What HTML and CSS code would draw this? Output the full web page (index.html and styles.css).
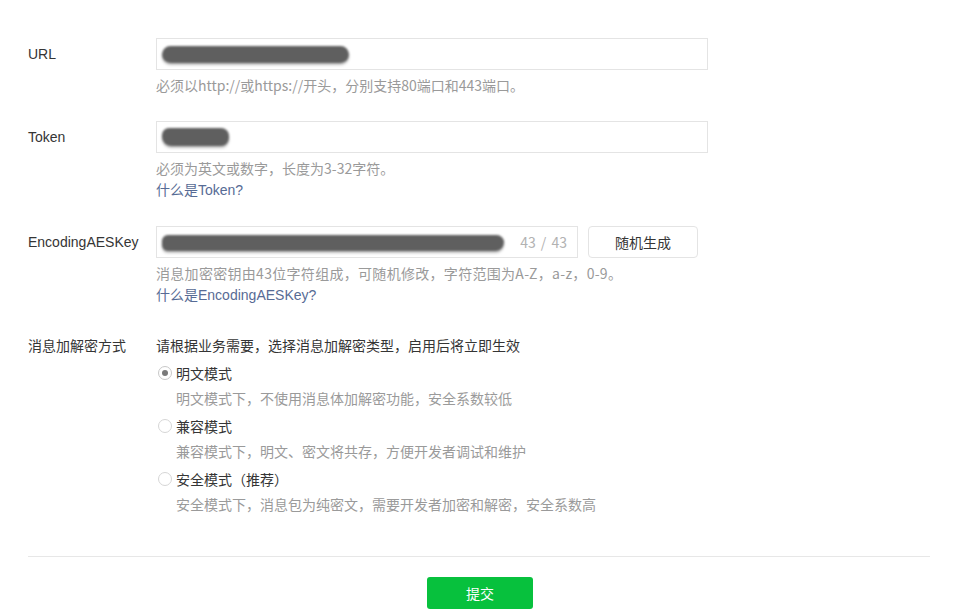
FILE: index.html
```html
<!DOCTYPE html>
<html lang="zh-CN">
<head>
<meta charset="utf-8">
<title>服务器配置</title>
<link rel="stylesheet" href="styles.css">
</head>
<body>
<form class="form">
  <div class="row">
    <label class="label">URL</label>
    <div class="field">
      <div class="input input-wide"><span class="scribble scribble-url"></span></div>
      <p class="hint">必须以http://或https://开头，分别支持80端口和443端口。</p>
    </div>
  </div>

  <div class="row">
    <label class="label">Token</label>
    <div class="field">
      <div class="input input-wide"><span class="scribble scribble-token"></span></div>
      <p class="hint">必须为英文或数字，长度为3-32字符。</p>
      <a class="link" href="#">什么是Token?</a>
    </div>
  </div>

  <div class="row">
    <label class="label">EncodingAESKey</label>
    <div class="field">
      <div class="input-group">
        <div class="input input-key">
          <span class="scribble scribble-key"></span>
          <span class="counter">43 / 43</span>
        </div>
        <button type="button" class="btn-default">随机生成</button>
      </div>
      <p class="hint hint-wide">消息加密密钥由43位字符组成，可随机修改，字符范围为A-Z，a-z，0-9。</p>
      <a class="link" href="#">什么是EncodingAESKey?</a>
    </div>
  </div>

  <div class="row row-mode">
    <label class="label label-line">消息加解密方式</label>
    <div class="field">
      <p class="intro">请根据业务需要，选择消息加解密类型，启用后将立即生效</p>
      <div class="option">
        <span class="radio checked"></span><span class="option-title">明文模式</span>
      </div>
      <p class="option-desc">明文模式下，不使用消息体加解密功能，安全系数较低</p>
      <div class="option">
        <span class="radio"></span><span class="option-title">兼容模式</span>
      </div>
      <p class="option-desc">兼容模式下，明文、密文将共存，方便开发者调试和维护</p>
      <div class="option">
        <span class="radio"></span><span class="option-title">安全模式（推荐）</span>
      </div>
      <p class="option-desc">安全模式下，消息包为纯密文，需要开发者加密和解密，安全系数高</p>
    </div>
  </div>

  <div class="divider"></div>
  <div class="actions">
    <button type="button" class="btn-primary">提交</button>
  </div>
</form>
</body>
</html>
```

FILE: styles.css
```css
* { box-sizing: border-box; }

html, body {
  margin: 0;
  padding: 0;
  background: #ffffff;
}

body {
  font-family: "Liberation Sans", "Noto Sans CJK SC", sans-serif;
  font-size: 14px;
  color: #353535;
}

.form {
  width: 930px;
  padding: 38px 0 0 28px;
}

.row {
  display: flex;
  align-items: flex-start;
  margin-bottom: 25px;
}

.row-mode {
  padding-top: 2px;
  margin-bottom: 37px;
}

.label {
  width: 128px;
  flex: none;
  line-height: 32px;
  color: #353535;
}

.label-line {
  line-height: 26.5px;
}

.field {
  display: flex;
  flex-direction: column;
  align-items: flex-start;
}

.input {
  height: 32px;
  border: 1px solid #e4e4e4;
  background: #fff;
  display: flex;
  align-items: center;
  padding: 0 5px;
}

.input-wide { width: 552px; }

.input-group {
  display: flex;
  gap: 10px;
}

.input-key {
  width: 422px;
  padding-right: 10px;
}

.counter {
  margin-left: auto;
  color: #b2b2b2;
  font-family: "Noto Sans CJK SC", sans-serif;
  font-size: 14px;
  word-spacing: 2px;
}

.scribble {
  display: block;
  height: 17px;
  background: #5f5f5f;
  border-radius: 9px;
  filter: blur(0.8px);
  box-shadow: 0 2px 2px rgba(0,0,0,0.25);
}

.scribble-url { width: 187px; }
.scribble-token { width: 67px; height: 18px; border-radius: 7px 8px 8px 9px; }
.scribble-key { width: 342px; height: 16px; margin-top: 2px; margin-right: -8px; border-radius: 8px 10px 12px 8px; position: relative; z-index: 1; }

.btn-default {
  width: 110px;
  height: 32px;
  border: 1px solid #e4e4e4;
  border-radius: 4px;
  background: #fff;
  font-family: inherit;
  font-size: 14px;
  color: #353535;
  padding: 0;
}

.hint {
  margin: 4px 0 0;
  line-height: 22px;
  color: #9a9a9a;
  font-family: "Noto Sans CJK SC", sans-serif;
}

.hint-wide {
  letter-spacing: 0.3px;
}

.link {
  line-height: 22px;
  color: #576b95;
  text-decoration: none;
}

.intro {
  margin: 0;
  line-height: 26.5px;
  color: #353535;
}

.option {
  display: flex;
  align-items: center;
  height: 26.5px;
  padding-left: 2px;
}

.radio {
  width: 14px;
  height: 14px;
  border: 1px solid #d6d6d6;
  border-radius: 50%;
  margin-right: 4px;
  display: flex;
  align-items: center;
  justify-content: center;
  background: #fff;
}

.radio.checked {
  border-color: #c8c8c8;
}

.radio.checked::after {
  content: "";
  width: 6px;
  height: 6px;
  border-radius: 50%;
  background: #7a7a7a;
}

.option-title {
  color: #353535;
}

.option-desc {
  margin: 0;
  padding-left: 20px;
  line-height: 26.5px;
  color: #9a9a9a;
}

.divider {
  width: 902px;
  height: 1px;
  background: #e7e7e7;
}

.actions {
  width: 902px;
  display: flex;
  justify-content: center;
  padding-top: 20px;
}

.btn-primary {
  width: 106px;
  height: 32px;
  border: none;
  border-radius: 3px;
  background: #07c13d;
  color: #fff;
  font-family: inherit;
  font-size: 14px;
  padding: 0;
  margin-left: 2px;
}
```
